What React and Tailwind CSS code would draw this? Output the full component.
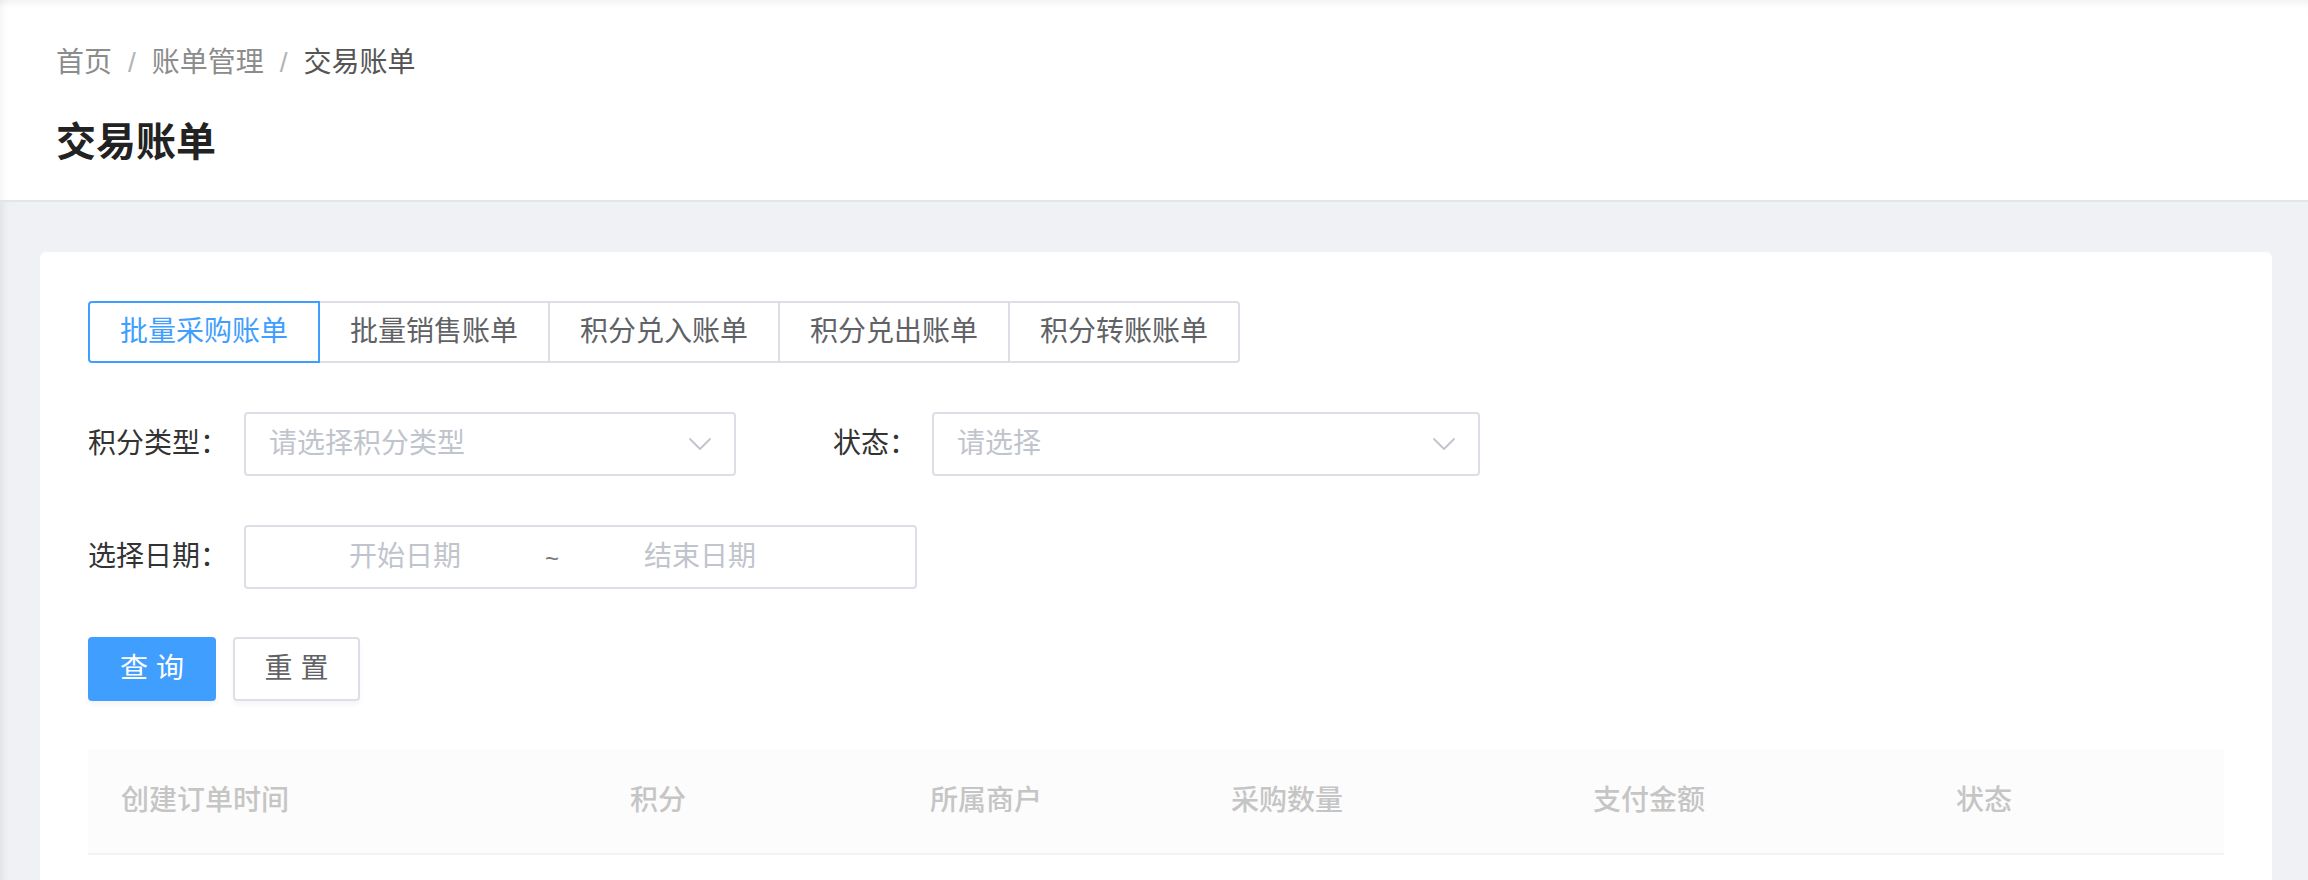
const tabs = ['批量采购账单', '批量销售账单', '积分兑入账单', '积分兑出账单', '积分转账账单'];

const columns = [
    { label: '创建订单时间', w: 'w-[509px]' },
    { label: '积分', w: 'w-[300px]' },
    { label: '所属商户', w: 'w-[301px]' },
    { label: '采购数量', w: 'w-[362px]' },
    { label: '支付金额', w: 'w-[363px]' },
    { label: '状态', w: 'flex-1' },
];

const font = { fontFamily: '"Liberation Sans", "Noto Sans CJK SC", sans-serif' };

const ArrowDown = () => (
    <svg width="24" height="14" viewBox="0 0 24 14" fill="none">
        <path d="M2 2 L12 12 L22 2" stroke="#c0c4cc" strokeWidth="1.8" strokeLinecap="round" strokeLinejoin="round" />
    </svg>
);

const Select = ({ placeholder, width }) => (
    <div className={`${width} h-[64px] border-2 border-[#dcdfe6] rounded-[4px] flex items-center justify-between pl-[23px] pr-[22px] bg-white`}>
        <span className="text-[28px] leading-[40px] text-[#c0c4cc]">{placeholder}</span>
        <ArrowDown />
    </div>
);

const App = () => {
    return (
        <div className="h-screen overflow-hidden flex flex-col bg-[#f0f1f5]" style={font}>
            {/* Header */}
            <header className="bg-white border-b-2 border-[#e4e5e8] pl-[56px] pt-[42px] pb-[30px] shadow-[inset_0_8px_8px_-6px_rgba(0,0,0,0.07),inset_8px_0_8px_-6px_rgba(0,0,0,0.05)]">
                <nav className="flex items-center text-[28px] leading-[42px]">
                    <span className="text-[#8c8c8c]">首页</span>
                    <span className="mx-[16px] text-[#b4b4b4]">/</span>
                    <span className="text-[#8c8c8c]">账单管理</span>
                    <span className="mx-[16px] text-[#b4b4b4]">/</span>
                    <span className="text-[#555]">交易账单</span>
                </nav>
                <h1 className="mt-[30px] text-[40px] leading-[56px] font-bold text-[#222]">交易账单</h1>
            </header>

            {/* Main */}
            <main className="flex-1 flex flex-col pt-[50px] pl-[40px] pr-[36px] shadow-[inset_8px_0_8px_-6px_rgba(0,0,0,0.08)]">
                <div className="flex-1 bg-white rounded-t-[6px] px-[48px] pt-[49px]">
                    {/* Tabs */}
                    <div className="flex">
                        {tabs.map((t, i) => (
                            <button
                                key={t}
                                className={`w-[232px] h-[62px] border-2 text-[28px] leading-[40px] ${i > 0 ? '-ml-[2px]' : ''} ${i === 0 ? 'rounded-l-[4px] border-[#409eff] text-[#409eff] z-10 relative' : 'border-[#dcdfe6] text-[#606266]'} ${i === tabs.length - 1 ? 'rounded-r-[4px]' : ''}`}
                            >
                                {t}
                            </button>
                        ))}
                    </div>

                    {/* Filters */}
                    <div className="flex items-center mt-[49px]">
                        <label className="text-[28px] leading-[40px] text-[#333] w-[156px]">积分类型：</label>
                        <Select placeholder="请选择积分类型" width="w-[492px]" />
                        <label className="text-[28px] leading-[40px] text-[#333] ml-[97px] w-[99px]">状态：</label>
                        <Select placeholder="请选择" width="w-[548px]" />
                    </div>

                    <div className="flex items-center mt-[49px]">
                        <label className="text-[28px] leading-[40px] text-[#333] w-[156px]">选择日期：</label>
                        <div className="w-[673px] h-[64px] border-2 border-[#dcdfe6] rounded-[4px] flex items-center pl-[44px] text-[28px] leading-[40px]">
                            <span className="w-[230px] text-center text-[#c0c4cc]">开始日期</span>
                            <span className="w-[64px] text-center text-[#777] text-[24px] pt-[4px]">~</span>
                            <span className="w-[232px] text-center text-[#c0c4cc]">结束日期</span>
                        </div>
                    </div>

                    {/* Actions */}
                    <div className="flex items-center gap-[17px] mt-[48px]">
                        <button className="w-[128px] h-[64px] rounded-[4px] bg-[#409eff] text-white text-[28px] leading-[40px] shadow-[0_4px_4px_rgba(0,0,0,0.04)]">
                            查 询
                        </button>
                        <button className="w-[127px] h-[64px] rounded-[4px] border-2 border-[#dcdfe6] bg-white text-[#606266] text-[28px] leading-[40px] shadow-[0_4px_4px_rgba(0,0,0,0.04)]">
                            重 置
                        </button>
                    </div>

                    {/* Table head */}
                    <div className="mt-[48px] flex items-center h-[106px] bg-[#fcfcfc] border-b-2 border-[#f2f2f2]">
                        {columns.map((c) => (
                            <div key={c.label} className={`${c.w} pl-[33px] text-[28px] leading-[40px] font-medium text-[#c5c5c5]`}>
                                {c.label}
                            </div>
                        ))}
                    </div>
                </div>
            </main>
        </div>
    );
};

export default App;
